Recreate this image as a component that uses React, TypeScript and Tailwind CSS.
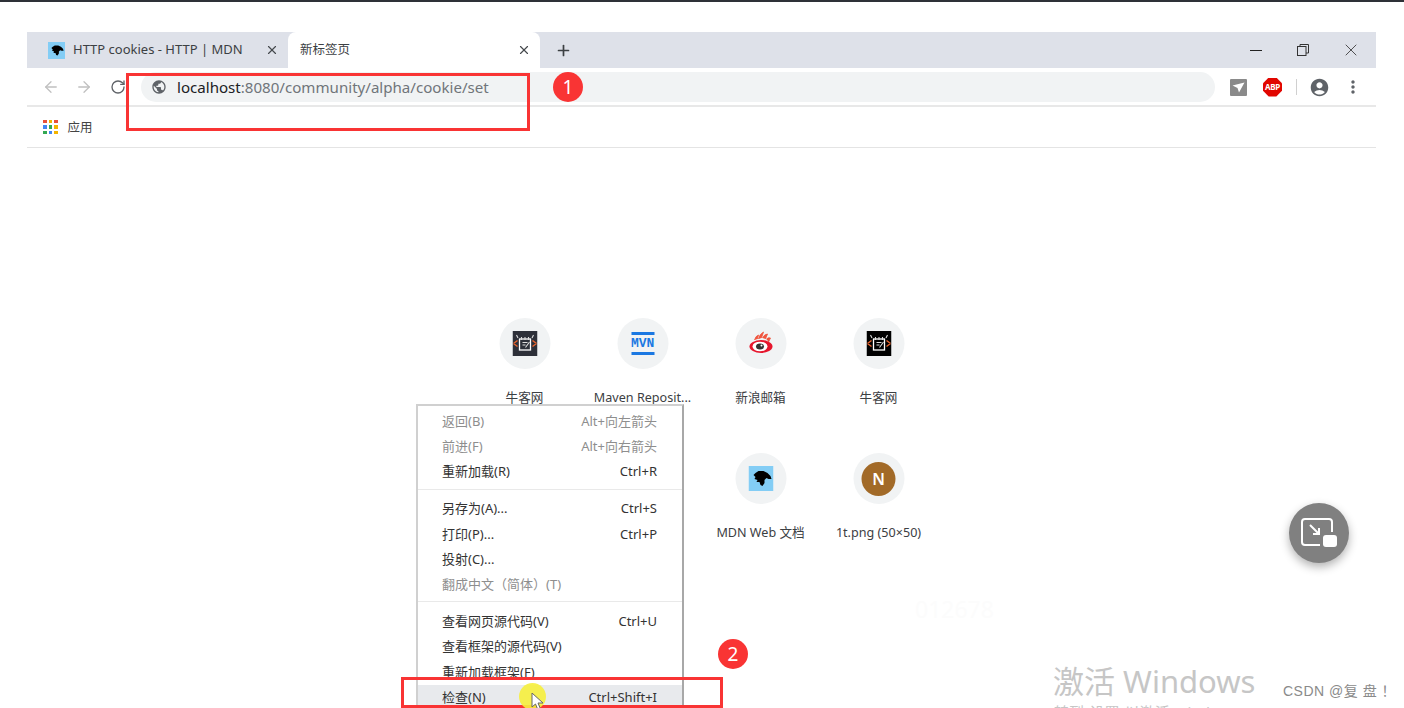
import { ArrowLeft, ArrowRight, Plus, RotateCw, X } from 'lucide-react'
import { MdAccountCircle, MdMoreVert, MdPublic } from 'react-icons/md'

const fontStack = "font-['Noto_Sans','Noto_Sans_CJK_SC',sans-serif]"

function MdnLogo({ size }: { size: number }) {
  return (
    <svg width={size} height={size} viewBox="0 0 25 25">
      <rect width="25" height="25" fill="#83cdf5" />
      <path
        d="M5 9 L7 7 L10 5 L15 5 L19 7 L22 10 L23 13 L20 13 L18 12 L16 14 L16 17 L14 20 L12 19 L11 16 L8 16 L9 14 L6 13 L7 11 Z"
        fill="#000"
      />
    </svg>
  )
}

function NowcoderLogo({ bg }: { bg: string }) {
  return (
    <svg width="25" height="25" viewBox="0 0 25 25">
      <rect width="25" height="25" fill={bg} />
      <path d="M1 12.5 L5 9.5 M1 12.5 L5 15.5 M24 12.5 L20 9.5 M24 12.5 L20 15.5" stroke="#e8632c" strokeWidth="1.5" fill="none" />
      <rect x="7" y="8" width="11" height="11" fill="none" stroke="#fff" strokeWidth="1.3" />
      <path d="M9 6 V9 M12.5 6 V9 M16 6 V9 M4 4 L5.5 7 M21 4 L19.5 7" stroke="#ddd" strokeWidth="1.1" />
      <path d="M10 11.5 H15 M10 14 H13 M13 16.5 L17 11" stroke="#ddd" strokeWidth="1.1" />
    </svg>
  )
}

function MvnLogo() {
  return (
    <div className="flex h-[23px] w-[23px] flex-col justify-between">
      <div className="h-[3px] bg-[#1b78e2]" />
      <div className="text-center font-['Liberation_Mono',monospace] text-[13px] leading-[13px] font-bold text-[#1b78e2]">
        MVN
      </div>
      <div className="h-[3px] bg-[#1b78e2]" />
    </div>
  )
}

function WeiboLogo() {
  return (
    <svg width="25" height="25" viewBox="0 0 25 25">
      <path d="M6 9 Q7 5 10 4 L9 8 M10 8 Q11 3 15 1 L13 7 M14 7 Q16 3 19 3 L17 8 M18 8 Q20 6 22 7 L20 11" fill="#f0563f" stroke="#f0563f" strokeWidth="0.8" />
      <ellipse cx="12.5" cy="15.5" rx="11.5" ry="6.5" fill="#e6162d" />
      <ellipse cx="11.5" cy="15.5" rx="7.5" ry="4.8" fill="#fff" />
      <ellipse cx="11.5" cy="15.5" rx="4" ry="3" fill="#333" />
      <circle cx="13" cy="14.5" r="1" fill="#fff" />
    </svg>
  )
}

const tiles = [
  { label: '牛客网', icon: <NowcoderLogo bg="#2d3039" /> },
  { label: 'Maven Reposit...', icon: <MvnLogo /> },
  { label: '新浪邮箱', icon: <WeiboLogo /> },
  { label: '牛客网', icon: <NowcoderLogo bg="#000" /> },
  null,
  null,
  { label: 'MDN Web 文档', icon: <MdnLogo size={25} /> },
  {
    label: '1t.png (50×50)',
    icon: (
      <div className="flex h-[34px] w-[34px] items-center justify-center rounded-full bg-[#a26a28] text-[16px] font-semibold text-white">
        N
      </div>
    ),
  },
]

const menuGroups = [
  [
    { text: '返回(B)', key: 'Alt+向左箭头', off: true },
    { text: '前进(F)', key: 'Alt+向右箭头', off: true },
    { text: '重新加载(R)', key: 'Ctrl+R' },
  ],
  [
    { text: '另存为(A)...', key: 'Ctrl+S' },
    { text: '打印(P)...', key: 'Ctrl+P' },
    { text: '投射(C)...' },
    { text: '翻成中文（简体）(T)', off: true },
  ],
  [
    { text: '查看网页源代码(V)', key: 'Ctrl+U' },
    { text: '查看框架的源代码(V)' },
    { text: '重新加载框架(F)' },
    { text: '检查(N)', key: 'Ctrl+Shift+I', active: true },
  ],
]

const appColors = ['#e8503a', '#f4b400', '#e8503a', '#4285f4', '#34a853', '#f4b400', '#34a853', '#4285f4', '#f4b400']

export default function App() {
  return (
    <div className={`relative h-[708px] w-[1404px] overflow-hidden bg-white ${fontStack}`}>
      <div className="h-[2px] bg-[#2e3138]" />

      <div className="mx-[27px] mt-[30px] w-[1349px]">
        {/* tab strip */}
        <div className="flex h-[36px] items-stretch bg-[#dee1e9]">
          <div className="flex w-[261px] items-center pr-[9px] pl-[21px]">
            <MdnLogo size={17} />
            <span className="ml-[8px] flex-1 text-[13px] whitespace-nowrap text-[#3c4043]">HTTP cookies - HTTP | MDN</span>
            <X className="h-[14px] w-[14px] text-[#45494d]" strokeWidth={2} />
          </div>
          <div className="flex w-[252px] items-center rounded-t-[8px] bg-white pr-[9px] pl-[12px]">
            <span className="flex-1 text-[12.5px] text-[#3c4043]">新标签页</span>
            <X className="h-[14px] w-[14px] text-[#45494d]" strokeWidth={2} />
          </div>
          <div className="flex w-[46px] items-center justify-center">
            <Plus className="h-[17px] w-[17px] text-[#3c4043]" strokeWidth={2.4} />
          </div>
          <div className="ml-auto flex items-center pr-[15px] text-[#333]">
            <div className="h-[1px] w-[12px] bg-[#222]" />
            <svg className="ml-[35px]" width="12" height="12" viewBox="0 0 12 12" fill="none" stroke="#333">
              <rect x="0.5" y="2.5" width="8.5" height="9" />
              <path d="M3 2.5 V0.5 H11.5 V9 H9" />
            </svg>
            <X className="ml-[32px] h-[20px] w-[20px]" strokeWidth={1} />
          </div>
        </div>

        {/* toolbar */}
        <div className="flex h-[39px] items-center border-b-2 border-[#e8e8e8] pt-[1px]">
          <ArrowLeft className="ml-[15px] h-[18px] w-[18px] text-[#c0c0c0]" strokeWidth={1.7} />
          <ArrowRight className="ml-[15px] h-[18px] w-[18px] text-[#c0c0c0]" strokeWidth={1.7} />
          <RotateCw className="ml-[17px] h-[16px] w-[16px] text-[#5f6368]" strokeWidth={2} />
          <div className="ml-[15px] flex h-[30px] w-[1074px] items-center rounded-full bg-[#f1f3f4] pl-[10px]">
            <MdPublic className="text-[16px] text-[#5f6368]" />
            <span className="ml-[10px] text-[15.1px] text-[#70757a]">
              <span className="text-[#202124]">localhost</span>:8080/community/alpha/cookie/set
            </span>
          </div>
          <div className="ml-[15px] flex h-[17px] w-[17px] items-center justify-center rounded-[1px] bg-[#8a8a8a]">
            <svg width="13" height="11" viewBox="0 0 13 11">
              <path d="M0.5 3.5 L12.5 0.5 L7 10.5 L5.5 6 Z" fill="#fff" />
            </svg>
          </div>
          <div className="ml-[16px] flex h-[19px] w-[19px] items-center justify-center bg-[#e10600] text-[8px] font-bold tracking-[-0.2px] text-white [clip-path:polygon(30%_0,70%_0,100%_30%,100%_70%,70%_100%,30%_100%,0_70%,0_30%)]">
            ABP
          </div>
          <div className="ml-[14px] h-[16px] w-[1px] bg-[#d0d0d0]" />
          <MdAccountCircle className="ml-[12px] text-[21px] text-[#5f6368]" />
          <MdMoreVert className="ml-[13px] text-[20px] text-[#5f6368]" />
        </div>

        {/* bookmarks */}
        <div className="flex h-[41px] items-center border-b border-[#e4e4e4] pl-[16px]">
          <div className="grid grid-cols-3 gap-[2px]">
            {appColors.map((color, i) => (
              <div key={i} className="h-[3.5px] w-[3.5px]" style={{ backgroundColor: color }} />
            ))}
          </div>
          <span className="mt-[2px] ml-[10px] text-[12.5px] text-[#444]">应用</span>
        </div>
      </div>

      {/* most visited */}
      <div className="mx-auto mt-[170px] grid w-[472px] translate-x-[-0.5px] grid-cols-4">
        {tiles.map((tile, i) => (
          <div key={i} className="flex h-[135px] flex-col items-center">
            {tile && (
              <>
                <div className="flex h-[51px] w-[51px] items-center justify-center rounded-full bg-[#f1f3f4]">{tile.icon}</div>
                <span className="mt-[20px] text-[12.6px] whitespace-nowrap text-[#3c4043]">{tile.label}</span>
              </>
            )}
          </div>
        ))}
      </div>

      <span className="absolute top-[592px] left-[915px] text-[23px] text-[#fcfcfc]">012678</span>

      {/* context menu */}
      <div className="absolute top-[404px] left-[416px] w-[268px] border-t-2 border-r-2 border-l-2 border-t-[#d0d0d0] border-r-[#a8a8a8] border-l-[#d0d0d0] bg-white pt-[3px]">
        {menuGroups.map((group, g) => (
          <div key={g} className={g > 0 ? 'mt-[4px] border-t border-[#e9e9e9] pt-[7px]' : ''}>
            {group.map((item) => (
              <div
                key={item.text}
                className={`flex h-[25.2px] items-center justify-between pr-[25px] pl-[24px] text-[13px] whitespace-nowrap ${
                  item.active ? 'bg-[#e8eaed]' : ''
                } ${item.off ? 'text-[#8e8e8e]' : 'text-[#333]'}`}
              >
                <span>{item.text}</span>
                {item.key && <span>{item.key}</span>}
              </div>
            ))}
          </div>
        ))}
      </div>

      {/* annotations */}
      <div className="absolute top-[73px] left-[126px] h-[58px] w-[404px] border-[3px] border-[#f93434]" />
      <div className="absolute top-[72px] left-[553px] flex h-[30px] w-[30px] items-center justify-center rounded-full bg-[#f93434] text-[19px] text-white">1</div>
      <div className="absolute top-[677px] left-[401px] h-[31px] w-[322px] border-[3px] border-[#f93434]" />
      <div className="absolute top-[639px] left-[718px] flex h-[30px] w-[30px] items-center justify-center rounded-full bg-[#f93434] text-[19px] text-white">2</div>

      {/* cursor highlight */}
      <div className="absolute top-[683px] left-[519px] h-[27px] w-[27px] rounded-full bg-[#f6ef3c]/90" />
      <svg className="absolute top-[693px] left-[531px]" width="14" height="18" viewBox="0 0 14 18">
        <path d="M1 0 V14 L4.5 11 L7 17 L9.5 16 L7 10 H12 Z" fill="#fff" stroke="#666" strokeWidth="1" />
      </svg>

      {/* picture in picture button */}
      <div className="absolute top-[503px] left-[1289px] flex h-[60px] w-[60px] items-center justify-center rounded-full bg-[#808080] shadow-[0_4px_10px_rgba(0,0,0,0.3)]">
        <svg width="38" height="32" viewBox="0 0 38 32" fill="none">
          <path d="M20 28 H5 Q2 28 2 25 V5 Q2 2 5 2 H29 Q32 2 32 5 V15" stroke="#fff" strokeWidth="2" />
          <path d="M10 8 L19 17 M19 11 V17 H13" stroke="#fff" strokeWidth="2" />
          <rect x="23" y="18" width="14" height="12" rx="3" fill="#fff" />
        </svg>
      </div>

      {/* watermark */}
      <span className="absolute top-[659px] left-[1053px] text-[31px] leading-[44px] whitespace-nowrap text-[#c6c6c6]">激活 Windows</span>
      <span className="absolute top-[702px] left-[1054px] text-[15px] leading-[20px] whitespace-nowrap text-[#c6c6c6]">转到“设置”以激活 Windows。</span>
      <span className="absolute top-[681px] left-[1283px] font-['Liberation_Sans','Noto_Sans_CJK_SC',sans-serif] text-[14px] leading-[20px] tracking-[0.5px] whitespace-nowrap text-[#8a8a8a]">
        CSDN @复 盘 ！
      </span>
    </div>
  )
}
